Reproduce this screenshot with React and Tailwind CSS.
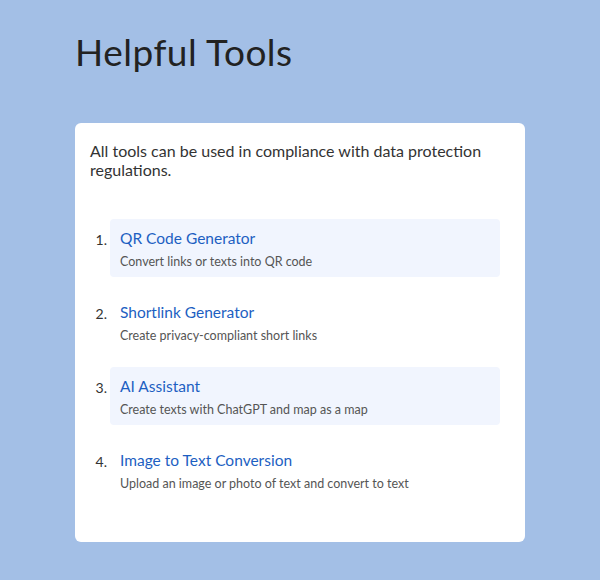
import React from "react";

const tools = [
  { n: 1, title: "QR Code Generator", desc: "Convert links or texts into QR code", hl: true },
  { n: 2, title: "Shortlink Generator", desc: "Create privacy-compliant short links", hl: false },
  { n: 3, title: "AI Assistant", desc: "Create texts with ChatGPT and map as a map", hl: true },
  { n: 4, title: "Image to Text Conversion", desc: "Upload an image or photo of text and convert to text", hl: false },
];

export default function App() {
  return (
    <div
      className="w-[600px] h-[580px] bg-[#a3bfe6] pl-[75px] pt-[30px]"
      style={{ fontFamily: "Lato, 'Noto Sans', sans-serif" }}
    >
      <h1 className="text-[37px] leading-[44px] text-[#222] font-normal tracking-[0.5px]">Helpful Tools</h1>
      <div className="mt-[49px] w-[450px] bg-white rounded-[6px] pl-[15px] pr-[25px] pt-[18px] pb-[43px]">
        <p className="text-[16px] leading-[19px] text-[#333]">
          All tools can be used in compliance with data protection regulations.
        </p>
        <ol className="mt-[40px] flex flex-col gap-[16px]">
          {tools.map((t) => (
            <li key={t.n} className="flex">
              <span className="w-[20px] text-right pr-[3px] pt-[12px] text-[14px] leading-[18px] text-[#333]">{t.n}.</span>
              <div
                className={
                  "w-[390px] h-[58px] rounded-[4px] px-[10px] pt-[9px] " +
                  (t.hl ? "bg-[#f1f5fe]" : "bg-white")
                }
              >
                <div className="text-[15.5px] leading-[20px] text-[#1d5fc2]">{t.title}</div>
                <div className="mt-[6px] text-[12.5px] leading-[16px] text-[#555]">{t.desc}</div>
              </div>
            </li>
          ))}
        </ol>
      </div>
    </div>
  );
}
